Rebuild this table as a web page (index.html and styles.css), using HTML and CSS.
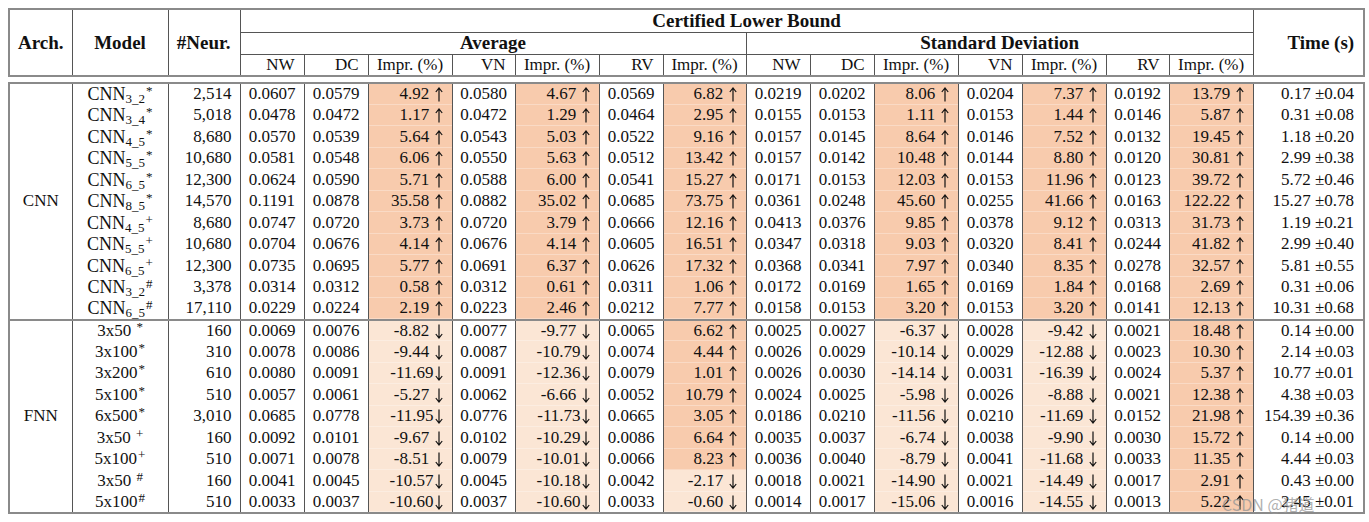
FILE: index.html
```html
<!DOCTYPE html>
<html>
<head>
<meta charset="utf-8">
<link rel="stylesheet" href="styles.css">
</head>
<body>
<svg class="defs" aria-hidden="true">
<symbol id="up" viewBox="0 0 8 15"><path d="M4 14.5V1.2M0.8 5L4 1L7.2 5" fill="none" stroke="#111" stroke-width="1.2"/></symbol>
<symbol id="dn" viewBox="0 0 8 15"><path d="M4 0.5V13.8M0.8 10L4 14L7.2 10" fill="none" stroke="#111" stroke-width="1.2"/></symbol>
</svg>
<div class="wrap">
<table class="tbl head">
<colgroup>
<col class="c-arch"><col class="c-model"><col class="c-neur">
<col class="c-m"><col class="c-m"><col class="c-i"><col class="c-m2"><col class="c-i"><col class="c-m"><col class="c-i2">
<col class="c-m"><col class="c-m"><col class="c-i"><col class="c-m"><col class="c-i"><col class="c-m2"><col class="c-i">
<col class="c-time">
</colgroup>
<tr class="h1">
<th rowspan="3">Arch.</th><th rowspan="3">Model</th><th rowspan="3" class="rb">#Neur.</th>
<th colspan="14">Certified Lower Bound</th>
<th rowspan="3" class="rb">Time (s)</th>
</tr>
<tr class="h2"><th colspan="7">Average</th><th colspan="7">Standard Deviation</th></tr>
<tr class="h3">
<th class="r">NW</th><th class="r">DC</th><th>Impr. (%)</th><th class="r">VN</th><th>Impr. (%)</th><th class="r">RV</th><th>Impr. (%)</th>
<th class="r">NW</th><th class="r">DC</th><th>Impr. (%)</th><th class="r">VN</th><th>Impr. (%)</th><th class="r">RV</th><th>Impr. (%)</th>
</tr>
</table>

<table class="tbl body">
<colgroup>
<col class="c-arch"><col class="c-model"><col class="c-neur">
<col class="c-m"><col class="c-m"><col class="c-i"><col class="c-m2"><col class="c-i"><col class="c-m"><col class="c-i2">
<col class="c-m"><col class="c-m"><col class="c-i"><col class="c-m"><col class="c-i"><col class="c-m2"><col class="c-i">
<col class="c-time">
</colgroup>
<tbody>
<tr><td class="arch" rowspan="11">CNN</td><td class="mod cnn">CNN<sub>3_2</sub><sup>*</sup></td><td class="n">2,514</td><td class="m">0.0607</td><td class="m">0.0579</td><td class="i up">4.92 <svg class="ar"><use href="#up"/></svg></td><td class="m">0.0580</td><td class="i up">4.67 <svg class="ar"><use href="#up"/></svg></td><td class="m">0.0569</td><td class="i up">6.82 <svg class="ar"><use href="#up"/></svg></td><td class="m">0.0219</td><td class="m">0.0202</td><td class="i up">8.06 <svg class="ar"><use href="#up"/></svg></td><td class="m">0.0204</td><td class="i up">7.37 <svg class="ar"><use href="#up"/></svg></td><td class="m">0.0192</td><td class="i up">13.79 <svg class="ar"><use href="#up"/></svg></td><td class="t">0.17 ±0.04</td></tr>
<tr><td class="mod cnn">CNN<sub>3_4</sub><sup>*</sup></td><td class="n">5,018</td><td class="m">0.0478</td><td class="m">0.0472</td><td class="i up">1.17 <svg class="ar"><use href="#up"/></svg></td><td class="m">0.0472</td><td class="i up">1.29 <svg class="ar"><use href="#up"/></svg></td><td class="m">0.0464</td><td class="i up">2.95 <svg class="ar"><use href="#up"/></svg></td><td class="m">0.0155</td><td class="m">0.0153</td><td class="i up">1.11 <svg class="ar"><use href="#up"/></svg></td><td class="m">0.0153</td><td class="i up">1.44 <svg class="ar"><use href="#up"/></svg></td><td class="m">0.0146</td><td class="i up">5.87 <svg class="ar"><use href="#up"/></svg></td><td class="t">0.31 ±0.08</td></tr>
<tr><td class="mod cnn">CNN<sub>4_5</sub><sup>*</sup></td><td class="n">8,680</td><td class="m">0.0570</td><td class="m">0.0539</td><td class="i up">5.64 <svg class="ar"><use href="#up"/></svg></td><td class="m">0.0543</td><td class="i up">5.03 <svg class="ar"><use href="#up"/></svg></td><td class="m">0.0522</td><td class="i up">9.16 <svg class="ar"><use href="#up"/></svg></td><td class="m">0.0157</td><td class="m">0.0145</td><td class="i up">8.64 <svg class="ar"><use href="#up"/></svg></td><td class="m">0.0146</td><td class="i up">7.52 <svg class="ar"><use href="#up"/></svg></td><td class="m">0.0132</td><td class="i up">19.45 <svg class="ar"><use href="#up"/></svg></td><td class="t">1.18 ±0.20</td></tr>
<tr><td class="mod cnn">CNN<sub>5_5</sub><sup>*</sup></td><td class="n">10,680</td><td class="m">0.0581</td><td class="m">0.0548</td><td class="i up">6.06 <svg class="ar"><use href="#up"/></svg></td><td class="m">0.0550</td><td class="i up">5.63 <svg class="ar"><use href="#up"/></svg></td><td class="m">0.0512</td><td class="i up">13.42 <svg class="ar"><use href="#up"/></svg></td><td class="m">0.0157</td><td class="m">0.0142</td><td class="i up">10.48 <svg class="ar"><use href="#up"/></svg></td><td class="m">0.0144</td><td class="i up">8.80 <svg class="ar"><use href="#up"/></svg></td><td class="m">0.0120</td><td class="i up">30.81 <svg class="ar"><use href="#up"/></svg></td><td class="t">2.99 ±0.38</td></tr>
<tr><td class="mod cnn">CNN<sub>6_5</sub><sup>*</sup></td><td class="n">12,300</td><td class="m">0.0624</td><td class="m">0.0590</td><td class="i up">5.71 <svg class="ar"><use href="#up"/></svg></td><td class="m">0.0588</td><td class="i up">6.00 <svg class="ar"><use href="#up"/></svg></td><td class="m">0.0541</td><td class="i up">15.27 <svg class="ar"><use href="#up"/></svg></td><td class="m">0.0171</td><td class="m">0.0153</td><td class="i up">12.03 <svg class="ar"><use href="#up"/></svg></td><td class="m">0.0153</td><td class="i up">11.96 <svg class="ar"><use href="#up"/></svg></td><td class="m">0.0123</td><td class="i up">39.72 <svg class="ar"><use href="#up"/></svg></td><td class="t">5.72 ±0.46</td></tr>
<tr><td class="mod cnn">CNN<sub>8_5</sub><sup>*</sup></td><td class="n">14,570</td><td class="m">0.1191</td><td class="m">0.0878</td><td class="i up">35.58 <svg class="ar"><use href="#up"/></svg></td><td class="m">0.0882</td><td class="i up">35.02 <svg class="ar"><use href="#up"/></svg></td><td class="m">0.0685</td><td class="i up">73.75 <svg class="ar"><use href="#up"/></svg></td><td class="m">0.0361</td><td class="m">0.0248</td><td class="i up">45.60 <svg class="ar"><use href="#up"/></svg></td><td class="m">0.0255</td><td class="i up">41.66 <svg class="ar"><use href="#up"/></svg></td><td class="m">0.0163</td><td class="i up">122.22 <svg class="ar"><use href="#up"/></svg></td><td class="t">15.27 ±0.78</td></tr>
<tr><td class="mod cnn">CNN<sub>4_5</sub><sup>+</sup></td><td class="n">8,680</td><td class="m">0.0747</td><td class="m">0.0720</td><td class="i up">3.73 <svg class="ar"><use href="#up"/></svg></td><td class="m">0.0720</td><td class="i up">3.79 <svg class="ar"><use href="#up"/></svg></td><td class="m">0.0666</td><td class="i up">12.16 <svg class="ar"><use href="#up"/></svg></td><td class="m">0.0413</td><td class="m">0.0376</td><td class="i up">9.85 <svg class="ar"><use href="#up"/></svg></td><td class="m">0.0378</td><td class="i up">9.12 <svg class="ar"><use href="#up"/></svg></td><td class="m">0.0313</td><td class="i up">31.73 <svg class="ar"><use href="#up"/></svg></td><td class="t">1.19 ±0.21</td></tr>
<tr><td class="mod cnn">CNN<sub>5_5</sub><sup>+</sup></td><td class="n">10,680</td><td class="m">0.0704</td><td class="m">0.0676</td><td class="i up">4.14 <svg class="ar"><use href="#up"/></svg></td><td class="m">0.0676</td><td class="i up">4.14 <svg class="ar"><use href="#up"/></svg></td><td class="m">0.0605</td><td class="i up">16.51 <svg class="ar"><use href="#up"/></svg></td><td class="m">0.0347</td><td class="m">0.0318</td><td class="i up">9.03 <svg class="ar"><use href="#up"/></svg></td><td class="m">0.0320</td><td class="i up">8.41 <svg class="ar"><use href="#up"/></svg></td><td class="m">0.0244</td><td class="i up">41.82 <svg class="ar"><use href="#up"/></svg></td><td class="t">2.99 ±0.40</td></tr>
<tr><td class="mod cnn">CNN<sub>6_5</sub><sup>+</sup></td><td class="n">12,300</td><td class="m">0.0735</td><td class="m">0.0695</td><td class="i up">5.77 <svg class="ar"><use href="#up"/></svg></td><td class="m">0.0691</td><td class="i up">6.37 <svg class="ar"><use href="#up"/></svg></td><td class="m">0.0626</td><td class="i up">17.32 <svg class="ar"><use href="#up"/></svg></td><td class="m">0.0368</td><td class="m">0.0341</td><td class="i up">7.97 <svg class="ar"><use href="#up"/></svg></td><td class="m">0.0340</td><td class="i up">8.35 <svg class="ar"><use href="#up"/></svg></td><td class="m">0.0278</td><td class="i up">32.57 <svg class="ar"><use href="#up"/></svg></td><td class="t">5.81 ±0.55</td></tr>
<tr><td class="mod cnn">CNN<sub>3_2</sub><sup>#</sup></td><td class="n">3,378</td><td class="m">0.0314</td><td class="m">0.0312</td><td class="i up">0.58 <svg class="ar"><use href="#up"/></svg></td><td class="m">0.0312</td><td class="i up">0.61 <svg class="ar"><use href="#up"/></svg></td><td class="m">0.0311</td><td class="i up">1.06 <svg class="ar"><use href="#up"/></svg></td><td class="m">0.0172</td><td class="m">0.0169</td><td class="i up">1.65 <svg class="ar"><use href="#up"/></svg></td><td class="m">0.0169</td><td class="i up">1.84 <svg class="ar"><use href="#up"/></svg></td><td class="m">0.0168</td><td class="i up">2.69 <svg class="ar"><use href="#up"/></svg></td><td class="t">0.31 ±0.06</td></tr>
<tr><td class="mod cnn">CNN<sub>6_5</sub><sup>#</sup></td><td class="n">17,110</td><td class="m">0.0229</td><td class="m">0.0224</td><td class="i up">2.19 <svg class="ar"><use href="#up"/></svg></td><td class="m">0.0223</td><td class="i up">2.46 <svg class="ar"><use href="#up"/></svg></td><td class="m">0.0212</td><td class="i up">7.77 <svg class="ar"><use href="#up"/></svg></td><td class="m">0.0158</td><td class="m">0.0153</td><td class="i up">3.20 <svg class="ar"><use href="#up"/></svg></td><td class="m">0.0153</td><td class="i up">3.20 <svg class="ar"><use href="#up"/></svg></td><td class="m">0.0141</td><td class="i up">12.13 <svg class="ar"><use href="#up"/></svg></td><td class="t">10.31 ±0.68</td></tr>
</tbody>
<tbody class="sec">
<tr><td class="arch" rowspan="9">FNN</td><td class="mod">3x50 <sup>*</sup></td><td class="n">160</td><td class="m">0.0069</td><td class="m">0.0076</td><td class="i dn">-8.82 <svg class="ar"><use href="#dn"/></svg></td><td class="m">0.0077</td><td class="i dn">-9.77 <svg class="ar"><use href="#dn"/></svg></td><td class="m">0.0065</td><td class="i up">6.62 <svg class="ar"><use href="#up"/></svg></td><td class="m">0.0025</td><td class="m">0.0027</td><td class="i dn">-6.37 <svg class="ar"><use href="#dn"/></svg></td><td class="m">0.0028</td><td class="i dn">-9.42 <svg class="ar"><use href="#dn"/></svg></td><td class="m">0.0021</td><td class="i up">18.48 <svg class="ar"><use href="#up"/></svg></td><td class="t">0.14 ±0.00</td></tr>
<tr><td class="mod">3x100<sup>*</sup></td><td class="n">310</td><td class="m">0.0078</td><td class="m">0.0086</td><td class="i dn">-9.44 <svg class="ar"><use href="#dn"/></svg></td><td class="m">0.0087</td><td class="i dn">-10.79<svg class="ar"><use href="#dn"/></svg></td><td class="m">0.0074</td><td class="i up">4.44 <svg class="ar"><use href="#up"/></svg></td><td class="m">0.0026</td><td class="m">0.0029</td><td class="i dn">-10.14 <svg class="ar"><use href="#dn"/></svg></td><td class="m">0.0029</td><td class="i dn">-12.88 <svg class="ar"><use href="#dn"/></svg></td><td class="m">0.0023</td><td class="i up">10.30 <svg class="ar"><use href="#up"/></svg></td><td class="t">2.14 ±0.03</td></tr>
<tr><td class="mod">3x200<sup>*</sup></td><td class="n">610</td><td class="m">0.0080</td><td class="m">0.0091</td><td class="i dn">-11.69<svg class="ar"><use href="#dn"/></svg></td><td class="m">0.0091</td><td class="i dn">-12.36<svg class="ar"><use href="#dn"/></svg></td><td class="m">0.0079</td><td class="i up">1.01 <svg class="ar"><use href="#up"/></svg></td><td class="m">0.0026</td><td class="m">0.0030</td><td class="i dn">-14.14 <svg class="ar"><use href="#dn"/></svg></td><td class="m">0.0031</td><td class="i dn">-16.39 <svg class="ar"><use href="#dn"/></svg></td><td class="m">0.0024</td><td class="i up">5.37 <svg class="ar"><use href="#up"/></svg></td><td class="t">10.77 ±0.01</td></tr>
<tr><td class="mod">5x100<sup>*</sup></td><td class="n">510</td><td class="m">0.0057</td><td class="m">0.0061</td><td class="i dn">-5.27 <svg class="ar"><use href="#dn"/></svg></td><td class="m">0.0062</td><td class="i dn">-6.66 <svg class="ar"><use href="#dn"/></svg></td><td class="m">0.0052</td><td class="i up">10.79 <svg class="ar"><use href="#up"/></svg></td><td class="m">0.0024</td><td class="m">0.0025</td><td class="i dn">-5.98 <svg class="ar"><use href="#dn"/></svg></td><td class="m">0.0026</td><td class="i dn">-8.88 <svg class="ar"><use href="#dn"/></svg></td><td class="m">0.0021</td><td class="i up">12.38 <svg class="ar"><use href="#up"/></svg></td><td class="t">4.38 ±0.03</td></tr>
<tr><td class="mod">6x500<sup>*</sup></td><td class="n">3,010</td><td class="m">0.0685</td><td class="m">0.0778</td><td class="i dn">-11.95<svg class="ar"><use href="#dn"/></svg></td><td class="m">0.0776</td><td class="i dn">-11.73<svg class="ar"><use href="#dn"/></svg></td><td class="m">0.0665</td><td class="i up">3.05 <svg class="ar"><use href="#up"/></svg></td><td class="m">0.0186</td><td class="m">0.0210</td><td class="i dn">-11.56 <svg class="ar"><use href="#dn"/></svg></td><td class="m">0.0210</td><td class="i dn">-11.69 <svg class="ar"><use href="#dn"/></svg></td><td class="m">0.0152</td><td class="i up">21.98 <svg class="ar"><use href="#up"/></svg></td><td class="t">154.39 ±0.36</td></tr>
<tr><td class="mod">3x50 <sup>+</sup></td><td class="n">160</td><td class="m">0.0092</td><td class="m">0.0101</td><td class="i dn">-9.67 <svg class="ar"><use href="#dn"/></svg></td><td class="m">0.0102</td><td class="i dn">-10.29<svg class="ar"><use href="#dn"/></svg></td><td class="m">0.0086</td><td class="i up">6.64 <svg class="ar"><use href="#up"/></svg></td><td class="m">0.0035</td><td class="m">0.0037</td><td class="i dn">-6.74 <svg class="ar"><use href="#dn"/></svg></td><td class="m">0.0038</td><td class="i dn">-9.90 <svg class="ar"><use href="#dn"/></svg></td><td class="m">0.0030</td><td class="i up">15.72 <svg class="ar"><use href="#up"/></svg></td><td class="t">0.14 ±0.00</td></tr>
<tr><td class="mod">5x100<sup>+</sup></td><td class="n">510</td><td class="m">0.0071</td><td class="m">0.0078</td><td class="i dn">-8.51 <svg class="ar"><use href="#dn"/></svg></td><td class="m">0.0079</td><td class="i dn">-10.01<svg class="ar"><use href="#dn"/></svg></td><td class="m">0.0066</td><td class="i up">8.23 <svg class="ar"><use href="#up"/></svg></td><td class="m">0.0036</td><td class="m">0.0040</td><td class="i dn">-8.79 <svg class="ar"><use href="#dn"/></svg></td><td class="m">0.0041</td><td class="i dn">-11.68 <svg class="ar"><use href="#dn"/></svg></td><td class="m">0.0033</td><td class="i up">11.35 <svg class="ar"><use href="#up"/></svg></td><td class="t">4.44 ±0.03</td></tr>
<tr><td class="mod">3x50 <sup>#</sup></td><td class="n">160</td><td class="m">0.0041</td><td class="m">0.0045</td><td class="i dn">-10.57<svg class="ar"><use href="#dn"/></svg></td><td class="m">0.0045</td><td class="i dn">-10.18<svg class="ar"><use href="#dn"/></svg></td><td class="m">0.0042</td><td class="i dn">-2.17 <svg class="ar"><use href="#dn"/></svg></td><td class="m">0.0018</td><td class="m">0.0021</td><td class="i dn">-14.90 <svg class="ar"><use href="#dn"/></svg></td><td class="m">0.0021</td><td class="i dn">-14.49 <svg class="ar"><use href="#dn"/></svg></td><td class="m">0.0017</td><td class="i up">2.91 <svg class="ar"><use href="#up"/></svg></td><td class="t">0.43 ±0.00</td></tr>
<tr><td class="mod">5x100<sup>#</sup></td><td class="n">510</td><td class="m">0.0033</td><td class="m">0.0037</td><td class="i dn">-10.60<svg class="ar"><use href="#dn"/></svg></td><td class="m">0.0037</td><td class="i dn">-10.60<svg class="ar"><use href="#dn"/></svg></td><td class="m">0.0033</td><td class="i dn">-0.60 <svg class="ar"><use href="#dn"/></svg></td><td class="m">0.0014</td><td class="m">0.0017</td><td class="i dn">-15.06 <svg class="ar"><use href="#dn"/></svg></td><td class="m">0.0016</td><td class="i dn">-14.55 <svg class="ar"><use href="#dn"/></svg></td><td class="m">0.0013</td><td class="i up">5.22 <svg class="ar"><use href="#up"/></svg></td><td class="t">2.45 ±0.01</td></tr>
</tbody>
</table>
</div>
<div class="watermark">CSDN @猪道</div>
</body>
</html>
```

FILE: styles.css
```css
html, body {
  margin: 0;
  padding: 0;
  background: #ffffff;
}
body {
  padding: 8px 0 0 8px;
  font-family: "Liberation Serif", "Times New Roman", serif;
  font-size: 17px;
  color: #111;
}
.defs {
  position: absolute;
  width: 0;
  height: 0;
  overflow: hidden;
}
.wrap {
  display: flex;
  flex-direction: column;
  gap: 5px;
  width: 1355px;
}
.tbl {
  border-collapse: collapse;
  table-layout: fixed;
  width: 1355px;
  border: 2px solid #8a8a8a;
}
.c-arch { width: 63px; }
.c-model { width: 96px; }
.c-neur { width: 72px; }
.c-m { width: 64px; }
.c-m2 { width: 63px; }
.c-i { width: 84px; }
.c-i2 { width: 83px; }
.c-time { width: 111px; }

.tbl th, .tbl td {
  border-left: 1px solid #555;
  border-right: 1px solid #555;
  padding: 0;
  white-space: nowrap;
  overflow: visible;
}
.head th {
  font-weight: normal;
  text-align: center;
  vertical-align: middle;
  line-height: 20px;
}
.head tr.h1 th, .head tr.h2 th {
  font-weight: bold;
  font-size: 19px;
}
.head th.rb {
  text-align: right;
  padding-right: 9px;
}
.head tr.h1 { height: 23px; }
.head tr.h2 { height: 22px; }
.head tr.h3 { height: 22px; }
.head tr.h1 th[colspan], .head tr.h2 th {
  border-bottom: 1px solid #555;
}
.head th.r {
  text-align: right;
  padding-right: 9px;
}

.body tr { height: 21.5px; }
.body td {
  line-height: 20px;
  vertical-align: middle;
}
.body tbody.sec tr:first-child td {
  border-top: 2px solid #8a8a8a;
}
.arch { text-align: center; }
.mod { text-align: center; }
.mod.cnn { font-size: 18px; }
.n { text-align: right; padding-right: 8px !important; }
.m { text-align: center; }
.i { text-align: right; padding-right: 9px !important; }
.t { text-align: right; padding-right: 9px !important; }
.up {
  background: #f8cbad;
  box-shadow: inset 0 -1px 0 rgba(255, 255, 255, 0.3);
}
.dn {
  background: #fbe6d5;
  box-shadow: inset 0 -1px 0 rgba(255, 255, 255, 0.3);
}
.ar {
  display: inline-block;
  width: 8px;
  height: 15px;
  vertical-align: -3px;
  margin-left: 1px;
}
sub, sup {
  font-size: 13px;
  line-height: 0;
}
sub { vertical-align: -3px; }
sup { vertical-align: 5px; padding-left: 1px; }

.watermark {
  position: absolute;
  left: 1222px;
  top: 493px;
  font-family: "Noto Sans CJK SC", "Noto Sans", sans-serif;
  font-size: 16px;
  line-height: 22px;
  color: rgba(150, 150, 150, 0.75);
  white-space: nowrap;
}
```
